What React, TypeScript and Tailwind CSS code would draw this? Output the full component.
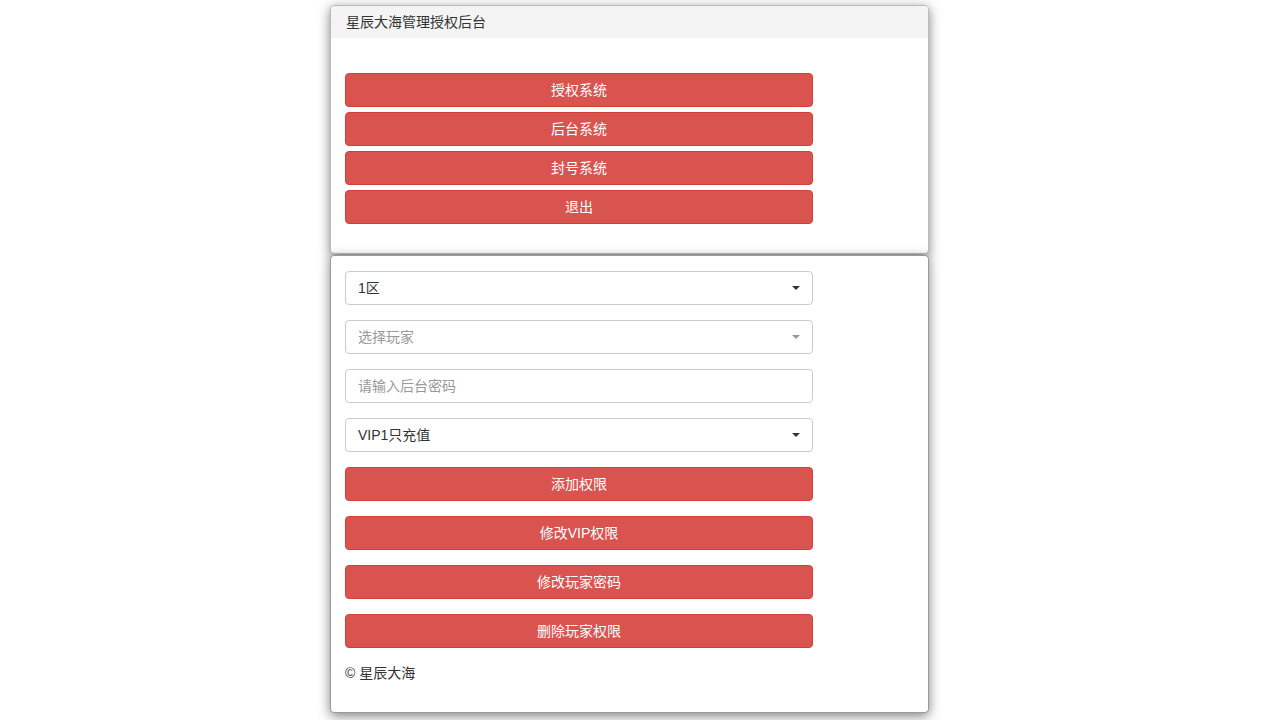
const font = {
  fontFamily: '"Liberation Sans", Arial, "Noto Sans CJK SC", sans-serif',
};

function DangerButton({ label }: { label: string }) {
  return (
    <button
      type="button"
      className="h-[34px] w-full rounded-[4px] border border-[#d43f3a] bg-[#d9534f] text-[14px] text-white"
    >
      {label}
    </button>
  );
}

function Caret({ muted }: { muted?: boolean }) {
  return (
    <span
      className={
        "h-0 w-0 border-x-[4px] border-t-[4px] border-x-transparent " +
        (muted ? "border-t-[#999]" : "border-t-[#333]")
      }
    />
  );
}

function SelectBox({ value, placeholder }: { value?: string; placeholder?: string }) {
  return (
    <div className="flex h-[34px] w-full items-center justify-between rounded-[4px] border border-[#ccc] bg-white pl-[12px] pr-[12px] text-[14px]">
      {value ? (
        <span className="text-[#333]">{value}</span>
      ) : (
        <span className="text-[#999]">{placeholder}</span>
      )}
      <Caret muted={!value} />
    </div>
  );
}

export default function App() {
  return (
    <div className="min-h-[720px] bg-white text-[14px] text-[#333]" style={font}>
      <div className="ml-[330px] flex w-[599px] flex-col pt-[5px]">
        {/* 菜单 */}
        <div className="h-[249px] rounded-[4px] border border-[#bbb] bg-white shadow-[0_3px_12px_rgba(0,0,0,0.5)]">
          <div className="flex h-[32px] items-center rounded-t-[4px] bg-[#f4f4f4] px-[15px] text-[#333]">
            星辰大海管理授权后台
          </div>
          <div className="flex w-[496px] flex-col gap-[5px] px-[14px] pt-[35px]">
            <DangerButton label="授权系统" />
            <DangerButton label="后台系统" />
            <DangerButton label="封号系统" />
            <DangerButton label="退出" />
          </div>
        </div>

        {/* 表单 */}
        <div className="mt-[1px] h-[458px] rounded-[4px] border border-[#999] bg-white shadow-[0_3px_12px_rgba(0,0,0,0.5)]">
          <div className="flex w-[496px] flex-col gap-[15px] px-[14px] pt-[15px]">
            <SelectBox value="1区" />
            <SelectBox placeholder="选择玩家" />
            <input
              type="password"
              placeholder="请输入后台密码"
              className="h-[34px] w-full rounded-[4px] border border-[#ccc] px-[12px] text-[14px] text-[#333] outline-none placeholder:text-[#999]"
            />
            <SelectBox value="VIP1只充值" />
            <DangerButton label="添加权限" />
            <DangerButton label="修改VIP权限" />
            <DangerButton label="修改玩家密码" />
            <DangerButton label="删除玩家权限" />
            <p className="leading-[20px] text-[#333]">© 星辰大海</p>
          </div>
        </div>
      </div>
    </div>
  );
}
